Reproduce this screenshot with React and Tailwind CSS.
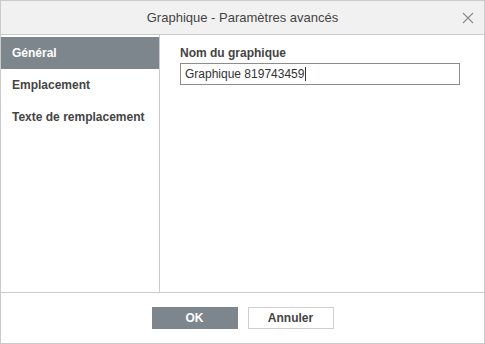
import React from "react";

const tabs = ["Général", "Emplacement", "Texte de remplacement"];

export default function App() {
  return (
    <div
      className="w-[485px] h-[344px] border border-[#cbcbcb] bg-white flex flex-col text-[#444]"
      style={{ fontFamily: '"Liberation Sans", Arial, sans-serif' }}
    >
      {/* Header */}
      <div className="h-[34px] shrink-0 bg-[#f1f1f1] border-b border-[#cbcbcb] flex items-center justify-center relative">
        <span className="text-[13px] leading-none">Graphique - Paramètres avancés</span>
        <svg
          className="absolute right-[10px] top-[11px]"
          width="12"
          height="12"
          viewBox="0 0 12 12"
        >
          <path d="M1 1 L11 11 M11 1 L1 11" stroke="#8a8a8a" strokeWidth="1.1" fill="none" />
        </svg>
      </div>

      {/* Body */}
      <div className="flex flex-1 min-h-0">
        <div className="w-[159px] shrink-0 border-r border-[#cbcbcb] pt-[2px]">
          {tabs.map((t, i) => (
            <div
              key={t}
              className={
                "h-[32px] pl-[11px] flex items-center text-[12px] font-bold " +
                (i === 0 ? "bg-[#7e868d] text-white" : "text-[#444]")
              }
            >
              {t}
            </div>
          ))}
        </div>
        <div className="flex-1 pl-[20px] pt-[11px]">
          <div className="text-[12px] font-bold leading-[14px] mb-[3px]">Nom du graphique</div>
          <div className="w-[280px] h-[22px] border border-[#8c8c8c] flex items-center pl-[4px] text-[12px] text-[#333]">
            Graphique 819743459
            <span className="inline-block w-px h-[14px] bg-[#333] ml-px" />
          </div>
        </div>
      </div>

      {/* Footer */}
      <div className="h-[51px] shrink-0 border-t border-[#cbcbcb] flex justify-center pt-[14px] gap-[10px]">
        <button className="w-[86px] h-[22px] bg-[#7e868d] text-white text-[12px] font-bold">OK</button>
        <button className="w-[86px] h-[22px] bg-white border border-[#cfcfcf] text-[#444] text-[12px] font-bold">
          Annuler
        </button>
      </div>
    </div>
  );
}
